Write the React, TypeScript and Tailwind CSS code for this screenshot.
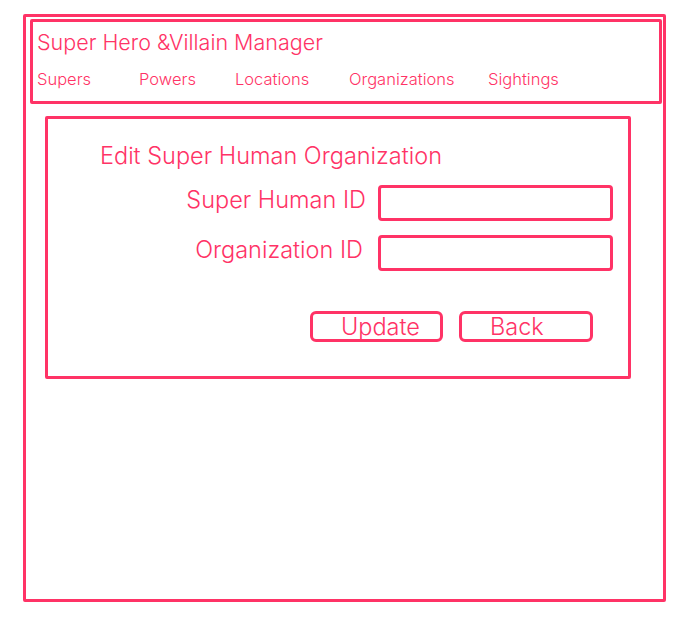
export default function App() {
  const nav = [
    { label: "Supers", w: "w-[102px]" },
    { label: "Powers", w: "w-[96px]" },
    { label: "Locations", w: "w-[114px]" },
    { label: "Organizations", w: "w-[139px]" },
    { label: "Sightings", w: "w-auto" },
  ];

  return (
    <div className="min-h-screen bg-white pt-[14px] pl-[23px] font-['Inter',sans-serif] font-light text-[#ff3366]">
      {/* Outer frame */}
      <div className="w-[643px] h-[588px] border-[3px] border-[#ff3366] rounded-[2px]">
        {/* Header */}
        <div className="ml-[4px] mt-[2px] w-[632px] h-[85px] border-[3px] border-[#ff3366] rounded-[2px] pl-[4px] pt-[8px]">
          <h1 className="text-[21.5px] leading-[24px]">Super Hero &amp;Villain Manager</h1>
          <nav className="flex mt-[15px] text-[16.5px] leading-[20px]">
            {nav.map((n) => (
              <span key={n.label} className={n.w}>
                {n.label}
              </span>
            ))}
          </nav>
        </div>

        {/* Edit panel */}
        <div className="ml-[19px] mt-[12px] w-[586px] h-[263px] border-[3px] border-[#ff3366] rounded-[2px] pl-[52px] pt-[23px]">
          <h2 className="text-[23.5px] leading-[28px]">Edit Super Human Organization</h2>
          <div className="grid grid-cols-[266px_235px] gap-x-[12px] gap-y-[14px] mt-[15px] items-start">
            <label className="text-right text-[23.5px] leading-[28px] mt-[1px]">Super Human ID</label>
            <div className="h-[36px] border-[3px] border-[#ff3366] rounded-[4px]" />
            <label className="text-right text-[23.5px] leading-[28px] mt-[1px] pr-[3px]">Organization ID</label>
            <div className="h-[36px] border-[3px] border-[#ff3366] rounded-[4px]" />
          </div>
          <div className="flex gap-[16px] mt-[40px] ml-[210px]">
            <button className="w-[133px] h-[31px] border-[3px] border-[#ff3366] rounded-[6px] text-left pl-[28px] text-[23.5px] leading-[24px] text-[#ff3366]">
              Update
            </button>
            <button className="w-[134px] h-[31px] border-[3px] border-[#ff3366] rounded-[6px] text-left pl-[28px] text-[23.5px] leading-[24px] text-[#ff3366]">
              Back
            </button>
          </div>
        </div>
      </div>
    </div>
  );
}
